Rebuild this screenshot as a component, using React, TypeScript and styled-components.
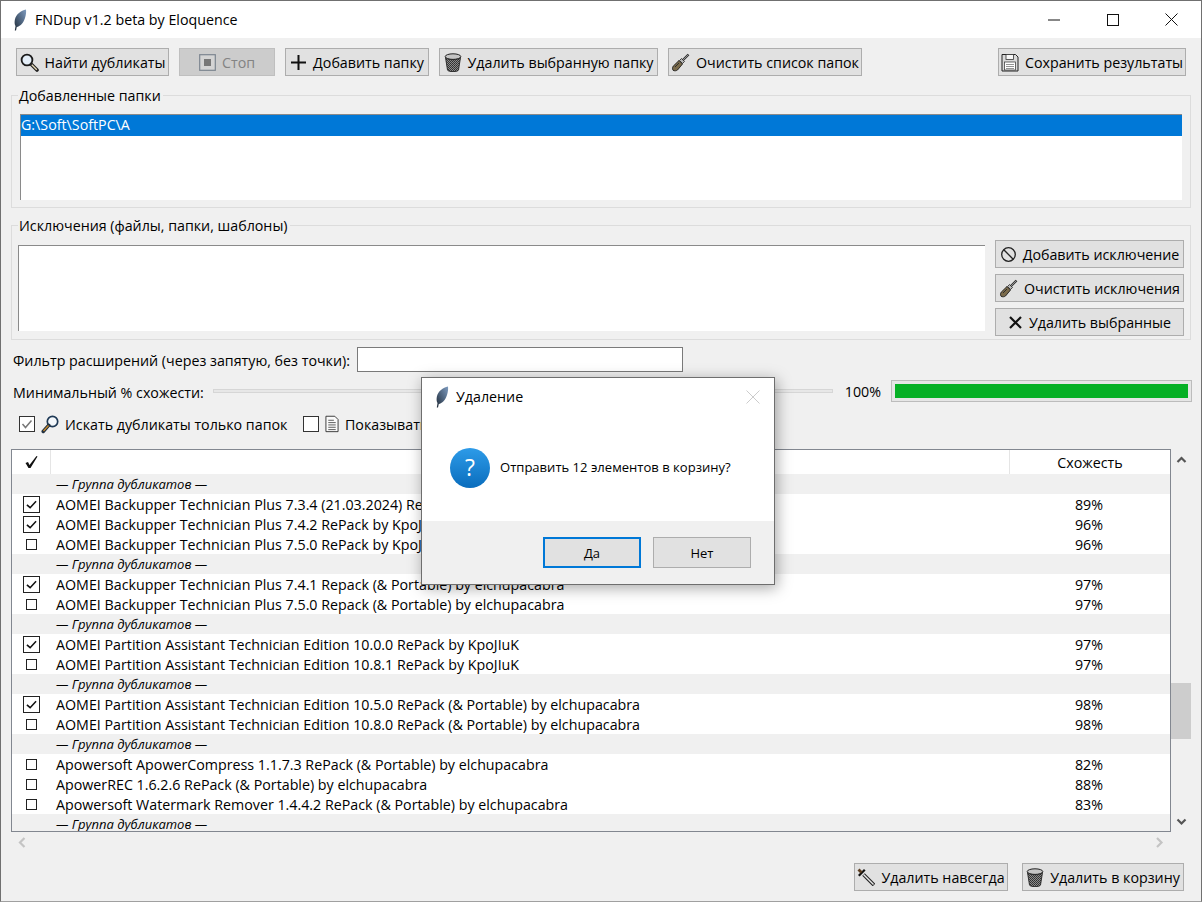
import React from "react";
import styled, { createGlobalStyle } from "styled-components";

const Global = createGlobalStyle`
  html, body { margin: 0; padding: 0; background: #f0f0f0; }
  * { box-sizing: border-box; }
  body { font-family: "Open Sans", "Noto Sans", sans-serif; font-size: 14.25px; color: #000; }
`;
const Win = styled.div`
  position: relative; width: 1202px; height: 902px; background: #f0f0f0; overflow: hidden;
  border: 1px solid #707070; border-bottom-color: #a0a0a0;
  display: flex; flex-direction: column;
`;
const TitleBar = styled.div`
  height: 37px; background: #fff; display: flex; align-items: center; flex: none; padding-left: 12px;
`;
const TitleText = styled.span` margin-left: 8px; font-size: 14.25px; flex: 1; `;
const WinBtn = styled.div`
  width: 59px; height: 37px; display: flex; align-items: center; justify-content: center;
`;
const Toolbar = styled.div`
  display: flex; gap: 10px; padding: 10px 15px 0 15px; height: 38px; flex: none;
`;
const Btn = styled.div<{ $w: number; $off?: boolean }>`
  width: ${p => p.$w}px; height: 28px; flex: none;
  display: flex; align-items: center; justify-content: center; gap: 6px; white-space: nowrap;
  background: ${p => (p.$off ? "#cccccc" : "#e1e1e1")};
  border: 1px solid ${p => (p.$off ? "#bfbfbf" : "#adadad")};
  color: ${p => (p.$off ? "#838383" : "#000")};
  font-size: 14.25px;
`;
const Spacer = styled.div` flex: 1; `;
const Group = styled.div<{ $h: number; $mt: number }>`
  position: relative; margin: ${p => p.$mt}px 10px 0 10px; height: ${p => p.$h}px; flex: none;
  border: 1px solid #dcdcdc;
`;
const Legend = styled.span`
  position: absolute; left: 6px; top: -10px; background: #f0f0f0; padding: 0 2px 0 1px; line-height: 20px; font-size: 14.25px;
`;
const ListBox = styled.div`
  margin: 18px 8px 0 8px; height: 86px; background: #fff;
  border-top: 1px solid #8a8a8a; border-left: 1px solid #8a8a8a;
`;
const SelRow = styled.div`
  height: 21px; line-height: 20px; background: #0078d7; color: #fff; font-size: 14.25px;
`;
const ExcBody = styled.div` display: flex; height: 100%; padding: 14px 6px 0 6px; gap: 10px; `;
const ExcArea = styled.div`
  width: 967px; height: 86px; margin-top: 5px; background: #fff;
  border-top: 1px solid #8a8a8a; border-left: 1px solid #8a8a8a;
`;
const ExcBtns = styled.div` display: flex; flex-direction: column; gap: 6px; `;
const FilterRow = styled.div`
  display: flex; align-items: center; margin: 6px 0 0 12px; height: 26px; flex: none;
`;
const Label = styled.span` font-size: 14.25px; margin-top: 2px; `;
const TextInput = styled.div`
  width: 326px; height: 25px; margin-left: 7px; background: #fff; border: 1px solid #7a7a7a;
`;
const SliderRow = styled.div`
  display: flex; align-items: center; margin: 8px 0 0 12px; height: 22px; flex: none;
`;
const Track = styled.div`
  width: 620px; margin-left: 9px; height: 4px; background: #e7e7e7; border: 1px solid #d6d6d6;
`;
const Pct = styled.span` margin-left: 12px; width: 46px; `;
const Progress = styled.div`
  width: 301px; height: 22px; background: #e6e6e6; border: 1px solid #bcbcbc; padding: 3px;
`;
const Fill = styled.div` height: 100%; background: #06b025; `;
const CheckRow = styled.div`
  display: flex; align-items: center; margin: 12px 0 0 18px; height: 20px; flex: none;
`;
const CheckBox = styled.div`
  width: 16px; height: 16px; background: #fff; border: 1px solid #333; flex: none;
  display: flex; align-items: center; justify-content: center;
`;
const CheckItem = styled.div<{ $w: number }>`
  display: flex; align-items: center; gap: 6px; width: ${p => p.$w}px; flex: none; white-space: nowrap;
`;
const TableRow = styled.div`
  display: flex; margin: 15px 0 0 10px; flex: none; height: 383px;
`;
const Table = styled.div`
  width: 1160px; height: 383px; border: 1px solid #828790; background: #fff; overflow: hidden;
`;
const Head = styled.div` display: flex; height: 24px; background: #fff; `;
const HeadCheck = styled.div`
  width: 39px; border-right: 1px solid #e5e5e5; display: flex; align-items: center; justify-content: center;
`;
const HeadName = styled.div` flex: 1; border-right: 1px solid #e5e5e5; `;
const HeadSim = styled.div` width: 160px; text-align: center; line-height: 25px; font-size: 14.25px; `;
const GroupRow = styled.div`
  height: 20px; background: #f0f0f0; padding-left: 44px; line-height: 20px; font-size: 13px; font-style: italic;
`;
const Row = styled.div` height: 20px; display: flex; align-items: center; background: #fff; white-space: nowrap; `;
const MarkCell = styled.div` width: 39px; display: flex; justify-content: center; align-items: center; flex: none; `;
const NameCell = styled.div` width: 958px; flex: none; padding-left: 5px; font-size: 14.25px; `;
const SimCell = styled.div` width: 160px; text-align: center; font-size: 14.25px; `;
const Checked = styled.div`
  width: 17px; height: 17px; border: 1.5px solid #222; display: flex; align-items: center; justify-content: center;
`;
const Unchecked = styled.div` width: 11px; height: 11px; border: 1.5px solid #222; `;
const VBar = styled.div`
  position: relative; width: 20px; height: 383px; display: flex; flex-direction: column; justify-content: space-between; align-items: center; padding: 6px 0 5px;
`;
const Thumb = styled.div`
  position: absolute; left: 0; top: 234px; width: 20px; height: 56px; background: #cdcdcd;
`;
const HBar = styled.div`
  display: flex; justify-content: space-between; align-items: center; margin: 0 0 0 10px; padding: 0 6px; width: 1160px; height: 20px; flex: none;
`;
const Bottom = styled.div`
  display: flex; justify-content: flex-end; gap: 14px; padding: 11px 17px 0 0; flex: none;
`;
const Dialog = styled.div`
  position: absolute; left: 420px; top: 376px; width: 354px; height: 208px; background: #fff;
  border: 1px solid #6e6e6e; box-shadow: 2px 3px 14px rgba(0,0,0,.35); display: flex; flex-direction: column;
`;
const DlgTitle = styled.div`
  height: 37px; display: flex; align-items: center; padding-left: 13px; font-size: 14.25px; flex: none;
`;
const DlgTitleText = styled.span` margin-left: 7px; flex: 1; `;
const DlgClose = styled.div` width: 42px; display: flex; justify-content: center; `;
const DlgBody = styled.div`
  height: 106px; display: flex; align-items: flex-start; padding: 33px 0 0 28px; gap: 10px; flex: none; font-size: 13px;
`;
const DlgMsg = styled.span` line-height: 38px; font-size: 13.05px; `;
const DlgFoot = styled.div`
  flex: 1; background: #f0f0f0; display: flex; justify-content: flex-end; gap: 12px; padding: 16px 23px 0 0;
`;
const DlgBtn = styled.div<{ $def?: boolean }>`
  width: 98px; height: 31px; background: #e1e1e1; display: flex; align-items: center; justify-content: center;
  border: ${p => (p.$def ? "2px solid #0078d7" : "1px solid #adadad")}; font-size: 13px;
`;

const Feather = () => (
  <svg width="14" height="22" viewBox="0 0 14 22">
    <defs>
      <linearGradient id="fg" x1="1" y1="0" x2="0" y2="1">
        <stop offset="0" stopColor="#7f9cc0" /><stop offset=".55" stopColor="#4a5f78" /><stop offset="1" stopColor="#1f2a36" />
      </linearGradient>
    </defs>
    <path d="M13 .5C8 1.500 3 5 1.800 11 1.300 14 1.800 16 2.500 17L1.800 21.500H3L3.800 18C7 17.500 10.500 14 12 9 13 6 13.300 3 13 .5z" fill="url(#fg)" />
  </svg>
);
const Lens = () => (
  <svg width="19" height="19" viewBox="0 0 19 19">
    <circle cx="7" cy="7" r="5.400" fill="#e4eef8" stroke="#1a1a1a" strokeWidth="1.800" />
    <path d="M11.500 11.500l5.500 5.500" stroke="#222" strokeWidth="3.600" strokeLinecap="round" />
    <path d="M11.800 11.800l5 5" stroke="#e6d9b8" strokeWidth="1.300" />
  </svg>
);
const LensBlue = () => (
  <svg width="18" height="19" viewBox="0 0 18 19">
    <circle cx="11.500" cy="6.500" r="5.200" fill="#f4f8fc" stroke="#1f3a56" strokeWidth="1.700" />
    <path d="M7.800 10.200L2.200 16.500" stroke="#1f2f40" strokeWidth="3.400" strokeLinecap="round" />
    <path d="M7.500 10.500L2.500 16" stroke="#c98a2c" strokeWidth="1.300" />
  </svg>
);
const StopIco = () => (
  <svg width="17" height="17" viewBox="0 0 17 17">
    <rect x=".7" y=".7" width="15.600" height="15.600" fill="#d4d4d4" stroke="#7c8590" strokeWidth="1.200" />
    <rect x="5" y="5" width="7" height="7" fill="#777" />
  </svg>
);
const Plus = () => (
  <svg width="17" height="17" viewBox="0 0 17 17"><path d="M8.500 1v15M1 8.500h15" stroke="#111" strokeWidth="2" /></svg>
);
const Trash = () => (
  <svg width="18" height="19" viewBox="0 0 18 19">
    <defs>
      <pattern id="mesh" width="2" height="2" patternUnits="userSpaceOnUse">
        <rect width="2" height="2" fill="#8c8c8c" /><rect width="1" height="1" fill="#2e2e2e" /><rect x="1" y="1" width="1" height="1" fill="#3a3a3a" />
      </pattern>
    </defs>
    <ellipse cx="9" cy="3.600" rx="7.800" ry="2.800" fill="#c4c4c4" stroke="#222" />
    <path d="M1.500 4.500l2 12.500c.2 1 2.700 1.600 5.500 1.600s5.300-.6 5.500-1.600l2-12.500c-1 1.500-4 2.200-7.500 2.200S2.500 6 1.500 4.500z" fill="url(#mesh)" stroke="#222" strokeWidth=".9" />
  </svg>
);
const Brush = () => (
  <svg width="19" height="19" viewBox="0 0 19 19">
    <path d="M17.500 1.500L11.500 7.500" stroke="#333" strokeWidth="2.400" />
    <path d="M17 2L12 7" stroke="#aaa" strokeWidth=".8" />
    <path d="M10.500 5.500l3 3-2 2-3-3z" fill="#b5b5b5" stroke="#222" strokeWidth=".8" />
    <path d="M8 7.500l3.500 3.500-5 6c-1 .8-3 1.200-4.500.2-.8-1-.6-2.800.2-4z" fill="#7a6a4a" stroke="#1c1c1c" strokeWidth=".9" />
    <path d="M4 14l4-4" stroke="#2d2d2d" strokeWidth="1" />
  </svg>
);
const Save = () => (
  <svg width="18" height="19" viewBox="0 0 18 19">
    <path d="M1 1.500h13.500L17 4v14H1z" fill="#d9d9d9" stroke="#222" />
    <rect x="5" y="1.500" width="7.500" height="5" fill="#f7f7f7" stroke="#333" strokeWidth=".8" />
    <rect x="3.500" y="9" width="11" height="8" fill="#fff" stroke="#444" strokeWidth=".8" />
    <path d="M5 11.500h8M5 13.500h8M5 15.500h8" stroke="#777" strokeWidth=".8" />
  </svg>
);
const Ban = () => (
  <svg width="17" height="17" viewBox="0 0 17 17">
    <circle cx="8.500" cy="8.500" r="6.800" fill="none" stroke="#222" strokeWidth="1.300" />
    <path d="M3.800 3.800l9.400 9.400" stroke="#222" strokeWidth="1.300" />
  </svg>
);
const Cross = () => (
  <svg width="15" height="15" viewBox="0 0 15 15"><path d="M2 2l11 11M13 2L2 13" stroke="#111" strokeWidth="2.200" /></svg>
);
const Doc = () => (
  <svg width="14" height="18" viewBox="0 0 15 18">
    <path d="M1 .700h9.500L14 4.200v13H1z" fill="#fafafa" stroke="#333" />
    <path d="M3.500 5h6M3.500 7.500h8M3.500 10h8M3.500 12.500h8M3.500 15h8" stroke="#555" />
  </svg>
);
const Sword = () => (
  <svg width="18" height="18" viewBox="0 0 18 18">
    <path d="M6.500 6.500l10.500 10.500" stroke="#222" strokeWidth="3.600" />
    <path d="M6.500 6.500l10 10" stroke="#e8e8e8" strokeWidth="1.400" />
    <path d="M1.800 7.800l6-6" stroke="#111" strokeWidth="2.200" />
    <path d="M1.500 1.500l3 3" stroke="#5b3d20" strokeWidth="2.800" />
  </svg>
);
const Tick = () => (
  <svg width="11" height="11" viewBox="0 0 12 12"><path d="M1 6.500L4.500 9.500 11 2.500" fill="none" stroke="#111" strokeWidth="1.700" /></svg>
);
const HeadTick = () => (
  <svg width="14" height="14" viewBox="0 0 14 14"><path d="M1.500 8L4 7 5.500 10 12.500 1 13.500 1.500 6.500 13 4.500 13z" fill="#111" /></svg>
);
const GreyTick = () => (
  <svg width="12" height="12" viewBox="0 0 12 12"><path d="M1.500 6L4.500 9.500 10.500 2.500" fill="none" stroke="#777" strokeWidth="1.500" /></svg>
);
const Chevron = ({ d, c = "#555" }: { d: "u" | "d" | "l" | "r"; c?: string }) => {
  const paths = { u: "M1.500 7l4-4 4 4", d: "M1.500 3.500l4 4 4-4", l: "M7.500 1L3 5.500 7.500 10", r: "M3 1l4.500 4.500L3 10" };
  return <svg width="11" height="11" viewBox="0 0 11 11"><path d={paths[d]} fill="none" stroke={c} strokeWidth="2.200" /></svg>;
};

type R = { g?: boolean; c?: boolean; n?: string; p?: string };
const rows: R[] = [
  { g: true },
  { c: true, n: "AOMEI Backupper Technician Plus 7.3.4 (21.03.2024) RePack by KpoJIuK", p: "89%" },
  { c: true, n: "AOMEI Backupper Technician Plus 7.4.2 RePack by KpoJIuK", p: "96%" },
  { n: "AOMEI Backupper Technician Plus 7.5.0 RePack by KpoJIuK", p: "96%" },
  { g: true },
  { c: true, n: "AOMEI Backupper Technician Plus 7.4.1 Repack (& Portable) by elchupacabra", p: "97%" },
  { n: "AOMEI Backupper Technician Plus 7.5.0 Repack (& Portable) by elchupacabra", p: "97%" },
  { g: true },
  { c: true, n: "AOMEI Partition Assistant Technician Edition 10.0.0 RePack by KpoJIuK", p: "97%" },
  { n: "AOMEI Partition Assistant Technician Edition 10.8.1 RePack by KpoJIuK", p: "97%" },
  { g: true },
  { c: true, n: "AOMEI Partition Assistant Technician Edition 10.5.0 RePack (& Portable) by elchupacabra", p: "98%" },
  { n: "AOMEI Partition Assistant Technician Edition 10.8.0 RePack (& Portable) by elchupacabra", p: "98%" },
  { g: true },
  { n: "Apowersoft ApowerCompress 1.1.7.3 RePack (& Portable) by elchupacabra", p: "82%" },
  { n: "ApowerREC 1.6.2.6 RePack (& Portable) by elchupacabra", p: "88%" },
  { n: "Apowersoft Watermark Remover 1.4.4.2 RePack (& Portable) by elchupacabra", p: "83%" },
  { g: true },
];

export default function App() {
  return (
    <Win>
      <Global />
      <TitleBar>
        <Feather />
        <TitleText>FNDup v1.2 beta by Eloquence</TitleText>
        <WinBtn><svg width="12" height="2"><path d="M0 1h12" stroke="#111" /></svg></WinBtn>
        <WinBtn><svg width="12" height="12"><rect x=".5" y=".5" width="11" height="11" fill="none" stroke="#111" /></svg></WinBtn>
        <WinBtn><svg width="13" height="13"><path d="M.5.5l12 12M12.500.5l-12 12" stroke="#111" /></svg></WinBtn>
      </TitleBar>
      <Toolbar>
        <Btn $w={153}><Lens />Найти дубликаты</Btn>
        <Btn $w={96} $off><StopIco />Стоп</Btn>
        <Btn $w={144}><Plus />Добавить папку</Btn>
        <Btn $w={219}><Trash />Удалить выбранную папку</Btn>
        <Btn $w={194}><Brush />Очистить список папок</Btn>
        <Spacer />
        <Btn $w={188}><Save />Сохранить результаты</Btn>
      </Toolbar>
      <Group $mt={19} $h={113}>
        <Legend>Добавленные папки</Legend>
        <ListBox><SelRow>G:\Soft\SoftPC\A</SelRow></ListBox>
      </Group>
      <Group $mt={17} $h={115}>
        <Legend>Исключения (файлы, папки, шаблоны)</Legend>
        <ExcBody>
          <ExcArea />
          <ExcBtns>
            <Btn $w={189}><Ban />Добавить исключение</Btn>
            <Btn $w={189}><Brush />Очистить исключения</Btn>
            <Btn $w={189}><Cross />Удалить выбранные</Btn>
          </ExcBtns>
        </ExcBody>
      </Group>
      <FilterRow>
        <Label>Фильтр расширений (через запятую, без точки):</Label>
        <TextInput />
      </FilterRow>
      <SliderRow>
        <Label>Минимальный % схожести:</Label>
        <Track />
        <Pct>100%</Pct>
        <Progress><Fill /></Progress>
      </SliderRow>
      <CheckRow>
        <CheckItem $w={284}>
          <CheckBox><GreyTick /></CheckBox>
          <LensBlue />
          <span>Искать дубликаты только папок</span>
        </CheckItem>
        <CheckItem $w={300}>
          <CheckBox />
          <Doc />
          <span>Показывать только файлы</span>
        </CheckItem>
      </CheckRow>
      <TableRow>
        <Table>
          <Head>
            <HeadCheck><HeadTick /></HeadCheck>
            <HeadName />
            <HeadSim>Схожесть</HeadSim>
          </Head>
          {rows.map((r, i) =>
            r.g ? (
              <GroupRow key={i}>— Группа дубликатов —</GroupRow>
            ) : (
              <Row key={i}>
                <MarkCell>{r.c ? <Checked><Tick /></Checked> : <Unchecked />}</MarkCell>
                <NameCell>{r.n}</NameCell>
                <SimCell>{r.p}</SimCell>
              </Row>
            )
          )}
        </Table>
        <VBar>
          <Chevron d="u" />
          <Thumb />
          <Chevron d="d" />
        </VBar>
      </TableRow>
      <HBar>
        <Chevron d="l" c="#c4c4c4" />
        <Chevron d="r" c="#c4c4c4" />
      </HBar>
      <Bottom>
        <Btn $w={154}><Sword />Удалить навсегда</Btn>
        <Btn $w={162}><Trash />Удалить в корзину</Btn>
      </Bottom>
      <Dialog>
        <DlgTitle>
          <Feather />
          <DlgTitleText>Удаление</DlgTitleText>
          <DlgClose><svg width="14" height="14"><path d="M.5.5l13 13M13.500.5l-13 13" stroke="#ccc" /></svg></DlgClose>
        </DlgTitle>
        <DlgBody>
          <svg width="40" height="40" viewBox="0 0 40 40">
            <defs>
              <linearGradient id="qb" x1="0" y1="0" x2="0" y2="1">
                <stop offset="0" stopColor="#2d9be8" /><stop offset="1" stopColor="#0a6dbd" />
              </linearGradient>
            </defs>
            <circle cx="20" cy="20" r="20" fill="url(#qb)" />
            <text x="20" y="28" textAnchor="middle" fontSize="23" fill="#fff" fontFamily="Open Sans, sans-serif">?</text>
          </svg>
          <DlgMsg>Отправить 12 элементов в корзину?</DlgMsg>
        </DlgBody>
        <DlgFoot>
          <DlgBtn $def>Да</DlgBtn>
          <DlgBtn>Нет</DlgBtn>
        </DlgFoot>
      </Dialog>
    </Win>
  );
}
